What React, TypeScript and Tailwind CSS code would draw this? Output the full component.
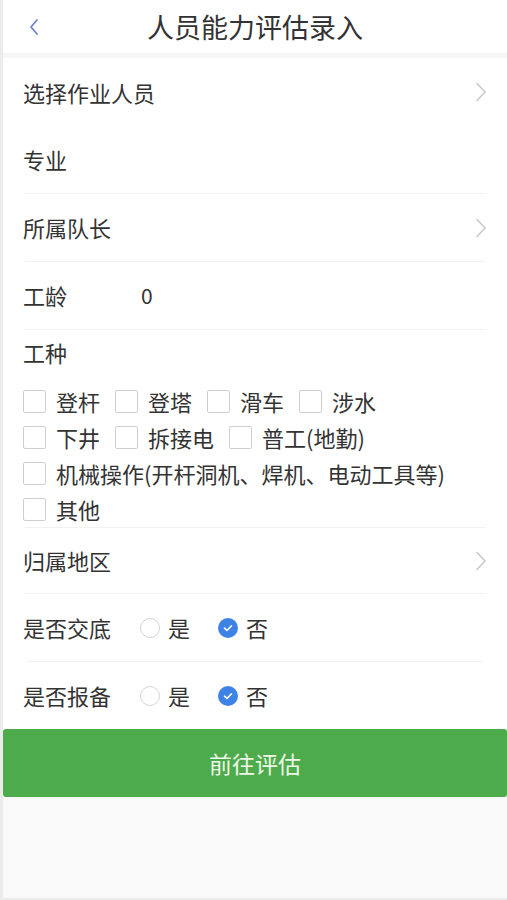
import { useState } from 'react'

const FONT = { fontFamily: '"Noto Sans CJK SC", "Noto Sans", sans-serif' }

const TYPE_ROWS = [
  ['登杆', '登塔', '滑车', '涉水'],
  ['下井', '拆接电', '普工(地勤)'],
  ['机械操作(开杆洞机、焊机、电动工具等)'],
  ['其他'],
]

function ChevronRight() {
  return (
    <svg width="12" height="22" viewBox="0 0 12 22" fill="none" className="shrink-0">
      <path d="M2 2.5 L10 11 L2 19.5" stroke="#c9c9c9" strokeWidth="1.6" strokeLinecap="round" strokeLinejoin="round" />
    </svg>
  )
}

function Radio({ checked }: { checked: boolean }) {
  if (checked)
    return (
      <span className="w-[20px] h-[20px] rounded-full bg-[#3f82e6] flex items-center justify-center shrink-0">
        <svg width="12" height="12" viewBox="0 0 12 12" fill="none">
          <path d="M2.5 6.2 L5 8.5 L9.5 3.8" stroke="#fff" strokeWidth="1.6" strokeLinecap="round" strokeLinejoin="round" />
        </svg>
      </span>
    )
  return <span className="w-[20px] h-[20px] rounded-full border-[1.5px] border-[#d4d4d4] shrink-0" />
}

function RadioRow({ label, value, onChange }: { label: string; value: boolean; onChange: (v: boolean) => void }) {
  return (
    <div className="h-[67px] px-[20px] flex items-center">
      <span className="w-[117px] shrink-0">{label}</span>
      <button className="flex items-center" onClick={() => onChange(true)}>
        <Radio checked={value} />
        <span className="ml-[8px]">是</span>
      </button>
      <button className="flex items-center ml-[28px]" onClick={() => onChange(false)}>
        <Radio checked={!value} />
        <span className="ml-[8px]">否</span>
      </button>
    </div>
  )
}

export default function App() {
  const [types, setTypes] = useState<string[]>([])
  const [briefed, setBriefed] = useState(false)
  const [filed, setFiled] = useState(false)

  function toggle(t: string) {
    setTypes(prev => (prev.includes(t) ? prev.filter(x => x !== t) : [...prev, t]))
  }

  return (
    <div style={FONT} className="h-[900px] flex flex-col border-l-[3px] border-b-2 border-[#ececec] bg-[#f9f9f9] text-[22px] text-[#333] overflow-hidden">
      {/* 顶部标题栏 */}
      <div className="h-[53px] bg-white flex items-center relative shrink-0">
        <button className="absolute left-[24px] top-[16px]">
          <svg width="14" height="22" viewBox="0 0 14 22" fill="none">
            <path d="M10 4 L4 11 L10 18" stroke="#6f82d6" strokeWidth="1.8" strokeLinecap="round" strokeLinejoin="round" />
          </svg>
        </button>
        <h1 className="flex-1 text-center text-[27px] text-[#333] leading-none">人员能力评估录入</h1>
      </div>
      <div className="h-[5px] bg-[#f6f6f6] shrink-0" />

      <div className="bg-white">
        <div className="h-[68px] px-[20px] flex items-center justify-between">
          <span>选择作业人员</span>
          <ChevronRight />
        </div>
        <div className="h-[67px] px-[20px] flex items-center">专业</div>
        <div className="mx-[22px] border-t border-[#f1f1f1]" />
        <div className="h-[67px] px-[20px] flex items-center justify-between">
          <span>所属队长</span>
          <ChevronRight />
        </div>
        <div className="mx-[22px] border-t border-[#f1f1f1]" />
        <div className="h-[67px] px-[20px] flex items-center">
          <span className="w-[118px] shrink-0">工龄</span>
          <span className="text-[21px]">0</span>
        </div>
        <div className="mx-[22px] border-t border-[#f1f1f1]" />

        {/* 工种 */}
        <div className="px-[20px]">
          <div className="h-[45px] flex items-center">工种</div>
          <div className="mt-[8px]">
            {TYPE_ROWS.map((row, i) => (
              <div key={i} className="h-[36px] flex items-center">
                {row.map(t => (
                  <button key={t} onClick={() => toggle(t)} className="flex items-center mr-[15px]">
                    <span className={`w-[23px] h-[23px] border border-[#cfcfcf] rounded-[2px] flex items-center justify-center ${types.includes(t) ? 'bg-[#3f82e6] border-[#3f82e6]' : 'bg-white'}`}>
                      {types.includes(t) && (
                        <svg width="14" height="14" viewBox="0 0 12 12" fill="none">
                          <path d="M2.5 6.2 L5 8.5 L9.5 3.8" stroke="#fff" strokeWidth="1.6" strokeLinecap="round" strokeLinejoin="round" />
                        </svg>
                      )}
                    </span>
                    <span className="ml-[10px] whitespace-nowrap">{t}</span>
                  </button>
                ))}
              </div>
            ))}
          </div>
        </div>
        <div className="mx-[22px] border-t border-[#f1f1f1]" />

        <div className="h-[65px] px-[20px] flex items-center justify-between">
          <span>归属地区</span>
          <ChevronRight />
        </div>
        <div className="mx-[22px] border-t border-[#f1f1f1]" />
        <RadioRow label="是否交底" value={briefed} onChange={setBriefed} />
        <div className="mx-[24px] border-t border-[#f1f1f1]" />
        <RadioRow label="是否报备" value={filed} onChange={setFiled} />
      </div>

      <button className="h-[68px] shrink-0 bg-[#4dab4b] rounded-[3px] text-[#eef8e8] text-[23px] flex items-center justify-center">
        前往评估
      </button>
    </div>
  )
}
